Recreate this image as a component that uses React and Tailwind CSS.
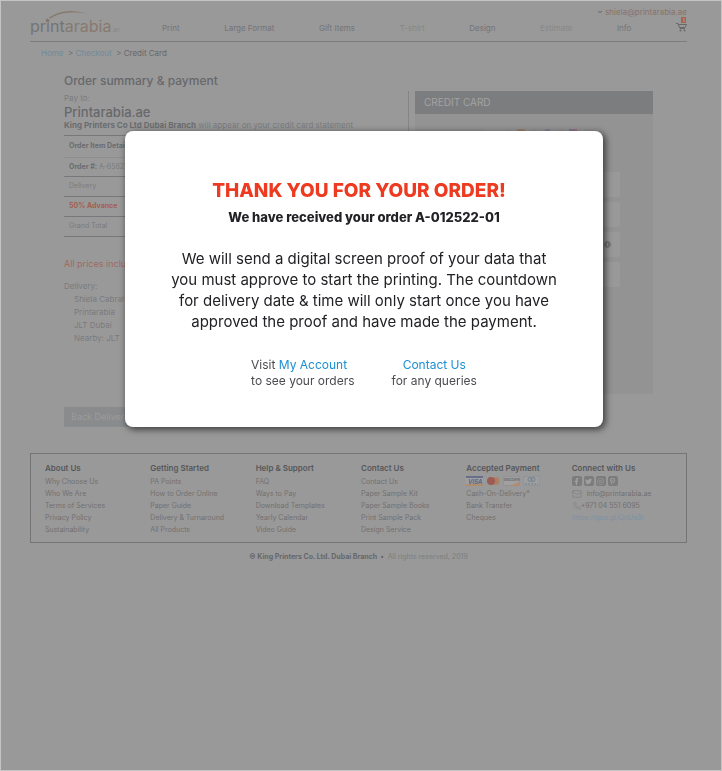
import { ChevronDown, Mail, Phone } from "lucide-react";
import {
  FaFacebookF,
  FaInfoCircle,
  FaInstagram,
  FaPinterestP,
  FaTwitter,
} from "react-icons/fa";

const navItems = [
  { label: "Print" },
  { label: "Large Format" },
  { label: "Gift Items" },
  { label: "T-shirt", muted: true },
  { label: "Design" },
  { label: "Estimate", muted: true },
  { label: "Info" },
];

const footerColumns = [
  {
    title: "About Us",
    links: [
      "Why Choose Us",
      "Who We Are",
      "Terms of Services",
      "Privacy Policy",
      "Sustainability",
    ],
  },
  {
    title: "Getting Started",
    links: [
      "PA Points",
      "How to Order Online",
      "Paper Guide",
      "Delivery & Turnaround",
      "All Products",
    ],
  },
  {
    title: "Help & Support",
    links: [
      "FAQ",
      "Ways to Pay",
      "Download Templates",
      "Yearly Calendar",
      "Video Guide",
    ],
  },
  {
    title: "Contact Us",
    links: [
      "Contact Us",
      "Paper Sample Kit",
      "Paper Sample Books",
      "Print Sample Pack",
      "Design Service",
    ],
  },
];

const socials = [
  { label: "Facebook", Icon: FaFacebookF },
  { label: "Twitter", Icon: FaTwitter },
  { label: "Instagram", Icon: FaInstagram },
  { label: "Pinterest", Icon: FaPinterestP },
];

const cardFields = ["Card number", "Name on card", "Security code", "Expiry"];

const Logo = () => (
  <svg width="92" height="28" viewBox="0 0 92 28" aria-label="printarabia.ae">
    <path d="M19 7.500C30 0 42-1 58 4C43 1.500 31 2 20 8.500Z" fill="#867a6c" />
    <path
      d="m17.500 8 .8 1.700 1.900.1-1.500 1.200.5 1.900-1.700-1.100-1.600 1.100.5-1.900-1.500-1.200 1.900-.1z"
      fill="#86705f"
    />
    <text
      x="0"
      y="22"
      fontFamily="Inter, sans-serif"
      fontSize="16"
      fontWeight="400"
      fill="#737477"
    >
      prınt
      <tspan fill="#877970">arabia</tspan>
      <tspan fontSize="6" fontWeight="300" fill="#828282">
        .ae
      </tspan>
    </text>
  </svg>
);

const CartIcon = () => (
  <svg width="11" height="15" viewBox="0 0 11 15" aria-hidden="true">
    <rect x="5" y="0" width="5" height="6" fill="#a8604f" />
    <path d="M7 1.500h1v3.500" stroke="#b9a7a2" strokeWidth="0.800" fill="none" />
    <path
      d="M0 6.500h2l2 5h5M2.500 7.500h8l-1.500 3h-5"
      stroke="#68696b"
      strokeWidth="1"
      fill="none"
    />
    <circle cx="4.500" cy="13.500" r="1" fill="#68696b" />
    <circle cx="8.500" cy="13.500" r="1" fill="#68696b" />
  </svg>
);

const PaymentCards = () => (
  <svg width="74" height="10" viewBox="0 0 74 10" aria-label="Accepted cards">
    <rect width="17" height="10" fill="#a0a0a0" />
    <rect width="17" height="2" fill="#676f8b" />
    <rect y="8" width="17" height="2" fill="#ae8d6c" />
    <text
      x="2"
      y="7.500"
      fontFamily="Inter, sans-serif"
      fontSize="6"
      fontWeight="700"
      fontStyle="italic"
      fill="#5c6585"
    >
      VISA
    </text>
    <circle cx="29.500" cy="5" r="4" fill="#ad8066" />
    <circle cx="25" cy="5" r="4" fill="#9a5c53" />
    <rect x="37.500" y="0.500" width="16" height="9" fill="#a0a0a0" stroke="#939393" />
    <path d="M54 5v5H42Q50 8 54 5" fill="#b18a73" />
    <text x="38" y="5" fontFamily="Inter, sans-serif" fontSize="3" fontWeight="700" fill="#666">
      DISCOVER
    </text>
    <rect x="57.500" y="0.500" width="16" height="9" fill="#9d9e9f" stroke="#8f959a" />
    <circle cx="64" cy="3.500" r="2" fill="none" stroke="#74818d" />
    <circle cx="67" cy="3.500" r="2" fill="none" stroke="#74818d" />
    <path d="M59 8h13" stroke="#74818d" strokeDasharray="2 1" />
  </svg>
);

const Header = () => (
  <header className="flex h-[41px] items-end justify-between border-b border-[#7b7c7e]">
    <a href="#home" className="mb-[3px] w-[132px]">
      <Logo />
    </a>
    <div className="flex flex-1 flex-col">
      <a
        href="#account"
        className="flex items-center gap-[2px] self-end text-[8px] leading-[10px] text-[#8a7367]"
      >
        <ChevronDown className="size-[6px] text-[#5c5d5f]" strokeWidth={4} />
        shiela@printarabia.ae
      </a>
      <nav className="flex h-[24px] items-start justify-between text-[8px] leading-[23px] text-[#737477]">
        {navItems.map(({ label, muted }) => (
          <a key={label} href="#nav" className={muted ? "text-[#878787]" : ""}>
            {label}
          </a>
        ))}
        <a href="#cart" aria-label="Cart" className="block leading-none">
          <CartIcon />
        </a>
      </nav>
    </div>
  </header>
);

const OrderSummary = () => (
  <section className="text-[8px] text-[#7a7b7e]">
    <h1 className="text-[12px] leading-[16px] font-medium text-[#67686b]">
      Order summary &amp; payment
    </h1>
    <p className="mt-[2px] leading-[14px]">Pay to:</p>
    <p className="text-[13px] leading-[14px] font-medium text-[#67686b]">
      Printarabia.ae
    </p>
    <p className="leading-[12px] whitespace-nowrap">
      <b className="font-bold text-[#6b6c6f]">
        King Printers Co Ltd Dubai Branch
      </b>{" "}
      will appear on your credit card statement
    </p>
    <table className="mt-[4px] w-[96%] border-t border-[#77787b] text-left text-[7px]">
      <thead>
        <tr className="h-[22px] border-b border-[#8e8e8e]">
          <th className="pl-[5px] font-bold text-[#6b6c6f]">
            Order Item Details
          </th>
        </tr>
      </thead>
      <tbody>
        <tr className="h-[19px] border-b border-[#77787b]">
          <td className="pl-[5px]">
            <b className="font-bold text-[#6b6c6f]">Order #:</b> A-658274
          </td>
        </tr>
        <tr className="h-[20px] border-b border-[#77787b]">
          <td className="pl-[5px]">Delivery</td>
        </tr>
        <tr className="h-[20px] border-b border-[#77787b]">
          <td className="pl-[5px] font-bold text-[#a35f50]">50% Advance</td>
        </tr>
        <tr className="h-[20px] border-b border-[#77787b]">
          <td className="pl-[5px]">Grand Total</td>
        </tr>
      </tbody>
    </table>
    <p className="mt-[20px] text-[9px] leading-[13px] text-[#a06a5e]">
      All prices include VAT
    </p>
    <p className="mt-[10px] leading-[13px]">Delivery:</p>
    <address className="pl-[10px] leading-[13px] not-italic">
      Shiela Cabral
      <br />
      Printarabia
      <br />
      JLT Dubai
      <br />
      Nearby: JLT
    </address>
    <button className="mt-[62px] h-[20px] w-[96px] bg-[#898b8c] pl-[7px] text-left text-[9px] text-[#9c9c9c]">
      Back Delivery
    </button>
  </section>
);

const CreditCard = () => (
  <section className="mt-[18px] h-[303px] bg-[#939393]">
    <h2 className="h-[23px] bg-[#7c7d7f] pl-[9px] text-[10px] leading-[23px] text-[#a3a3a3]">
      CREDIT CARD
    </h2>
    <div className="mt-[15px] flex justify-center gap-[5px]">
      <span className="h-[12px] w-[21px] bg-[#979797]" />
      <span className="flex h-[12px] w-[21px] justify-center bg-[#979797]">
        <span className="h-[2px] w-[8px] bg-[#a0806f]" />
      </span>
      <span className="flex h-[12px] w-[21px] justify-center bg-[#979797]">
        <span className="h-[2px] w-[5px] bg-[#808592]" />
      </span>
      <span className="flex h-[12px] w-[21px] justify-center bg-[#979797]">
        <span className="h-[2px] w-[4px] bg-[#7c7c9a]" />
        <span className="h-[2px] w-[4px] bg-[#9b7480]" />
      </span>
    </div>
    <form className="mt-[31px] mr-[33px] ml-[33px] flex flex-col gap-[5px]">
      {cardFields.map((field) => (
        <div key={field} className="relative">
          <input
            aria-label={field}
            className="block h-[25px] w-full rounded-xs bg-[#999]"
          />
          {field === "Security code" && (
            <FaInfoCircle className="absolute top-[9px] right-[9px] size-[7px] text-[#777]" />
          )}
        </div>
      ))}
    </form>
  </section>
);

const Footer = () => (
  <footer>
    <div className="grid h-[90px] grid-cols-6 border border-[#747577] pt-[8px] pr-[9px] pl-[14px] text-[7px] leading-[12px] text-[#737070]">
      {footerColumns.map(({ title, links }) => (
        <div key={title} className="whitespace-nowrap">
          <h3 className="mb-[2px] text-[8px] font-semibold text-[#56575a]">
            {title}
          </h3>
          <ul>
            {links.map((link) => (
              <li key={link}>
                <a href="#footer">{link}</a>
              </li>
            ))}
          </ul>
        </div>
      ))}
      <div className="whitespace-nowrap">
        <h3 className="mb-[2px] text-[8px] font-semibold text-[#56575a]">
          Accepted Payment
        </h3>
        <div className="flex h-[12px] items-start">
          <PaymentCards />
        </div>
        <p>Cash-On-Delivery*</p>
        <p>Bank Transfer</p>
        <p>Cheques</p>
      </div>
      <div className="whitespace-nowrap">
        <h3 className="mb-[2px] text-[8px] font-semibold text-[#56575a]">
          Connect with Us
        </h3>
        <div className="flex h-[12px] items-start gap-[2px]">
          {socials.map(({ label, Icon }) => (
            <a
              key={label}
              href="#social"
              aria-label={label}
              className="flex size-[10px] items-center justify-center rounded-xs bg-[#7c7c7c] text-[#a0a0a0]"
            >
              <Icon className="size-[7px]" />
            </a>
          ))}
        </div>
        <p className="flex items-center gap-[5px]">
          <Mail className="size-[10px]" strokeWidth={1} />
          info@printarabia.ae
        </p>
        <p className="flex items-center">
          <Phone className="ml-[1px] size-[8px]" strokeWidth={1} />
          +971 04 551 6095
        </p>
        <a href="#map" className="text-[#7b93a2]">
          https://goo.gl/QnUe8i
        </a>
      </div>
    </div>
    <p className="mt-[8px] text-center text-[7px] leading-[12px] text-[#7d7d7d]">
      <b className="font-bold text-[#66676a]">
        © King Printers Co. Ltd. Dubai Branch &nbsp;•
      </b>
      &nbsp; All rights reserved, 2019
    </p>
  </footer>
);

const ThankYouDialog = () => (
  <div className="fixed inset-0 flex items-start justify-center pt-[131px] pl-[6px]">
    <div
      role="dialog"
      aria-modal="true"
      aria-labelledby="thanks-title"
      className="w-2/3 rounded-lg bg-white pt-[46px] pb-[38px] text-center text-[#222226] shadow-[2px_2px_6px_1px_rgba(0,0,0,0.55)]"
    >
      <h2
        id="thanks-title"
        className="mr-[10px] text-[19px] leading-[28px] font-extrabold text-[#ee3a20]"
      >
        THANK YOU FOR YOUR ORDER!
      </h2>
      <p className="mt-[2px] text-[13px] leading-[20px] font-extrabold">
        We have received your order A-012522-01
      </p>
      <p className="mt-[21px] text-[15px] leading-[21px] whitespace-nowrap">
        We will send a digital screen proof of your data that
        <br />
        you must approve to start the printing. The countdown
        <br />
        for delivery date &amp; time will only start once you have
        <br />
        approved the proof and have made the payment.
      </p>
      <div className="mt-[25px] flex justify-center gap-[37px] text-[12px] leading-[16px] text-[#4b4c50]">
        <p className="text-left">
          Visit{" "}
          <a href="#account" className="text-[#1a8fd3]">
            My Account
          </a>
          <br />
          to see your orders
        </p>
        <p>
          <a href="#contact" className="text-[#1a8fd3]">
            Contact Us
          </a>
          <br />
          for any queries
        </p>
      </div>
    </div>
  </div>
);

export default function App() {
  return (
    <div className="min-h-screen border border-[#c4c4c4] bg-[#999] pr-[34px] pl-[29px] font-['Inter',sans-serif] font-normal">
      <Header />
      <div className="pt-[5px] pl-[11px] text-[8px] leading-[12px] text-[#66676a]">
        <a href="#home" className="text-[#728a98]">
          Home
        </a>
        &nbsp; &gt;{" "}
        <a href="#checkout" className="text-[#728a98]">
          Checkout
        </a>
        &nbsp; &gt; Credit Card
      </div>
      <main className="mt-[14px] grid grid-cols-[344fr_7px_238fr] pr-[34px] pl-[34px]">
        <OrderSummary />
        <div className="mt-[18px] h-[303px] border-l border-[#858585]" />
        <CreditCard />
      </main>
      <div className="mt-[26px]">
        <Footer />
      </div>
      <ThankYouDialog />
    </div>
  );
}
